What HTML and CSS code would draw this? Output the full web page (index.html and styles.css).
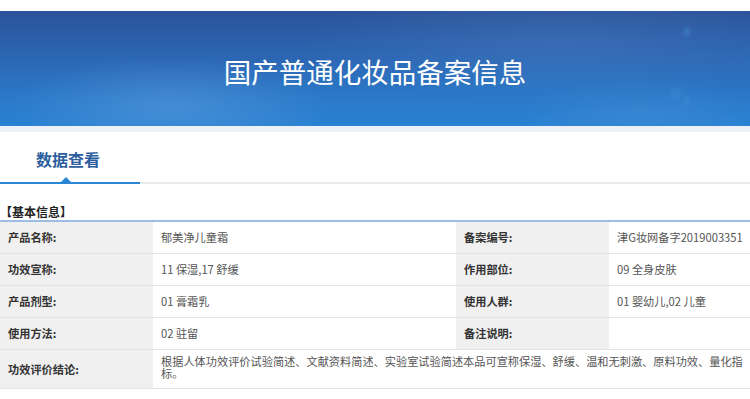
FILE: index.html
```html
<!DOCTYPE html>
<html lang="zh-CN">
<head>
<meta charset="utf-8">
<title>国产普通化妆品备案信息</title>
<link rel="stylesheet" href="styles.css">
</head>
<body>
<div class="top-gap"></div>
<header class="banner">
  <span class="bubble b1"></span>
  <span class="bubble b2"></span>
  <span class="bubble b3"></span>
  <h1 class="banner-title">国产普通化妆品备案信息</h1>
</header>
<div class="band"></div>
<nav class="tabs">
  <div class="tab active">数据查看<span class="caret"></span></div>
</nav>
<div class="section-title">【基本信息】</div>
<table class="info">
  <colgroup>
    <col class="c-label"><col class="c-value"><col class="c-label"><col>
  </colgroup>
  <tr class="first">
    <th>产品名称:</th><td>郁美净儿童霜</td>
    <th>备案编号:</th><td class="nowrap">津G妆网备字2019003351</td>
  </tr>
  <tr>
    <th>功效宣称:</th><td>11 保湿,17 舒缓</td>
    <th>作用部位:</th><td>09 全身皮肤</td>
  </tr>
  <tr>
    <th>产品剂型:</th><td>01 膏霜乳</td>
    <th>使用人群:</th><td>01 婴幼儿,02 儿童</td>
  </tr>
  <tr>
    <th>使用方法:</th><td>02 驻留</td>
    <th>备注说明:</th><td></td>
  </tr>
  <tr class="last">
    <th>功效评价结论:</th>
    <td colspan="3" class="long">根据人体功效评价试验简述、文献资料简述、实验室试验简述本品可宣称保湿、舒缓、温和无刺激、原料功效、量化指标。</td>
  </tr>
</table>
</body>
</html>
```

FILE: styles.css
```css
* { box-sizing: border-box; }
html, body { margin: 0; padding: 0; background: #fff; }
body {
  width: 750px;
  font-family: "Noto Sans CJK SC", "Microsoft YaHei", "Liberation Sans", sans-serif;
  color: #333;
  overflow: hidden;
}
.top-gap { height: 11px; background: #fff; }
.banner {
  position: relative;
  height: 115px;
  overflow: hidden;
  display: flex;
  align-items: center;
  justify-content: center;
  background:
    radial-gradient(ellipse 160px 50px at 170px 95px, rgba(120,170,230,0.35), rgba(120,170,230,0) 100%),
    radial-gradient(ellipse 260px 60px at 560px 30px, rgba(110,160,220,0.18), rgba(110,160,220,0) 100%),
    radial-gradient(ellipse 120px 40px at 640px 105px, rgba(110,170,230,0.18), rgba(110,170,230,0) 100%),
    linear-gradient(180deg, #2b5399 0%, #2c66b3 40%, #2a79c8 75%, #2a82d2 100%);
}
.bubble {
  position: absolute;
  border-radius: 50%;
  background: rgba(70,140,215,0.35);
  filter: blur(1px);
}
.b1 { left: 683px; top: 16px; width: 8px; height: 10px; }
.b2 { left: 670px; top: 76px; width: 11px; height: 13px; }
.b3 { left: 683px; top: 86px; width: 8px; height: 9px; }
.banner-title {
  margin: 6px 0 0;
  font-weight: 400;
  font-size: 27.5px;
  line-height: 1;
  color: #fff;
  letter-spacing: 0;
}
.band { height: 6px; background: #eef2f6; }
.tabs {
  display: flex;
  height: 52px;
  border-bottom: 2px solid #e8ebee;
}
.tab {
  position: relative;
  width: 140px;
  padding: 18px 0 0 36px;
  font-size: 16px;
  font-weight: 700;
  line-height: 18px;
  color: #2c5e9e;
  margin-bottom: -2px;
  border-bottom: 2px solid #2b86d6;
}
.caret {
  position: absolute;
  left: 61px;
  bottom: 0;
  width: 0;
  height: 0;
  border-left: 5.5px solid transparent;
  border-right: 5.5px solid transparent;
  border-bottom: 5px solid #2b86d6;
}
.section-title {
  margin-top: 20px;
  font-size: 12px;
  font-weight: 700;
  line-height: 16px;
  color: #222;
  border-bottom: 2px solid #9dbde6;
}
.info {
  width: 750px;
  border-collapse: collapse;
  table-layout: fixed;
  font-size: 11.2px;
}
.c-label { width: 153px; }
.c-value { width: 303px; }
.info th, .info td {
  height: 32px;
  padding: 0 4px 0 8px;
  border-bottom: 1px solid #e4e4e4;
  text-align: left;
  vertical-align: middle;
  line-height: 14px;
}
.info th {
  background: #f0f0f0;
  font-weight: 700;
  color: #333;
}
.info td {
  background: #fff;
  color: #555;
}
.info td.nowrap { white-space: nowrap; padding-right: 0; }
.info tr.first th, .info tr.first td { height: 31px; }
.info tr.last th { height: 39px; }
.info td.long {
  vertical-align: top;
  padding-top: 5px;
  line-height: 12px;
}
```
